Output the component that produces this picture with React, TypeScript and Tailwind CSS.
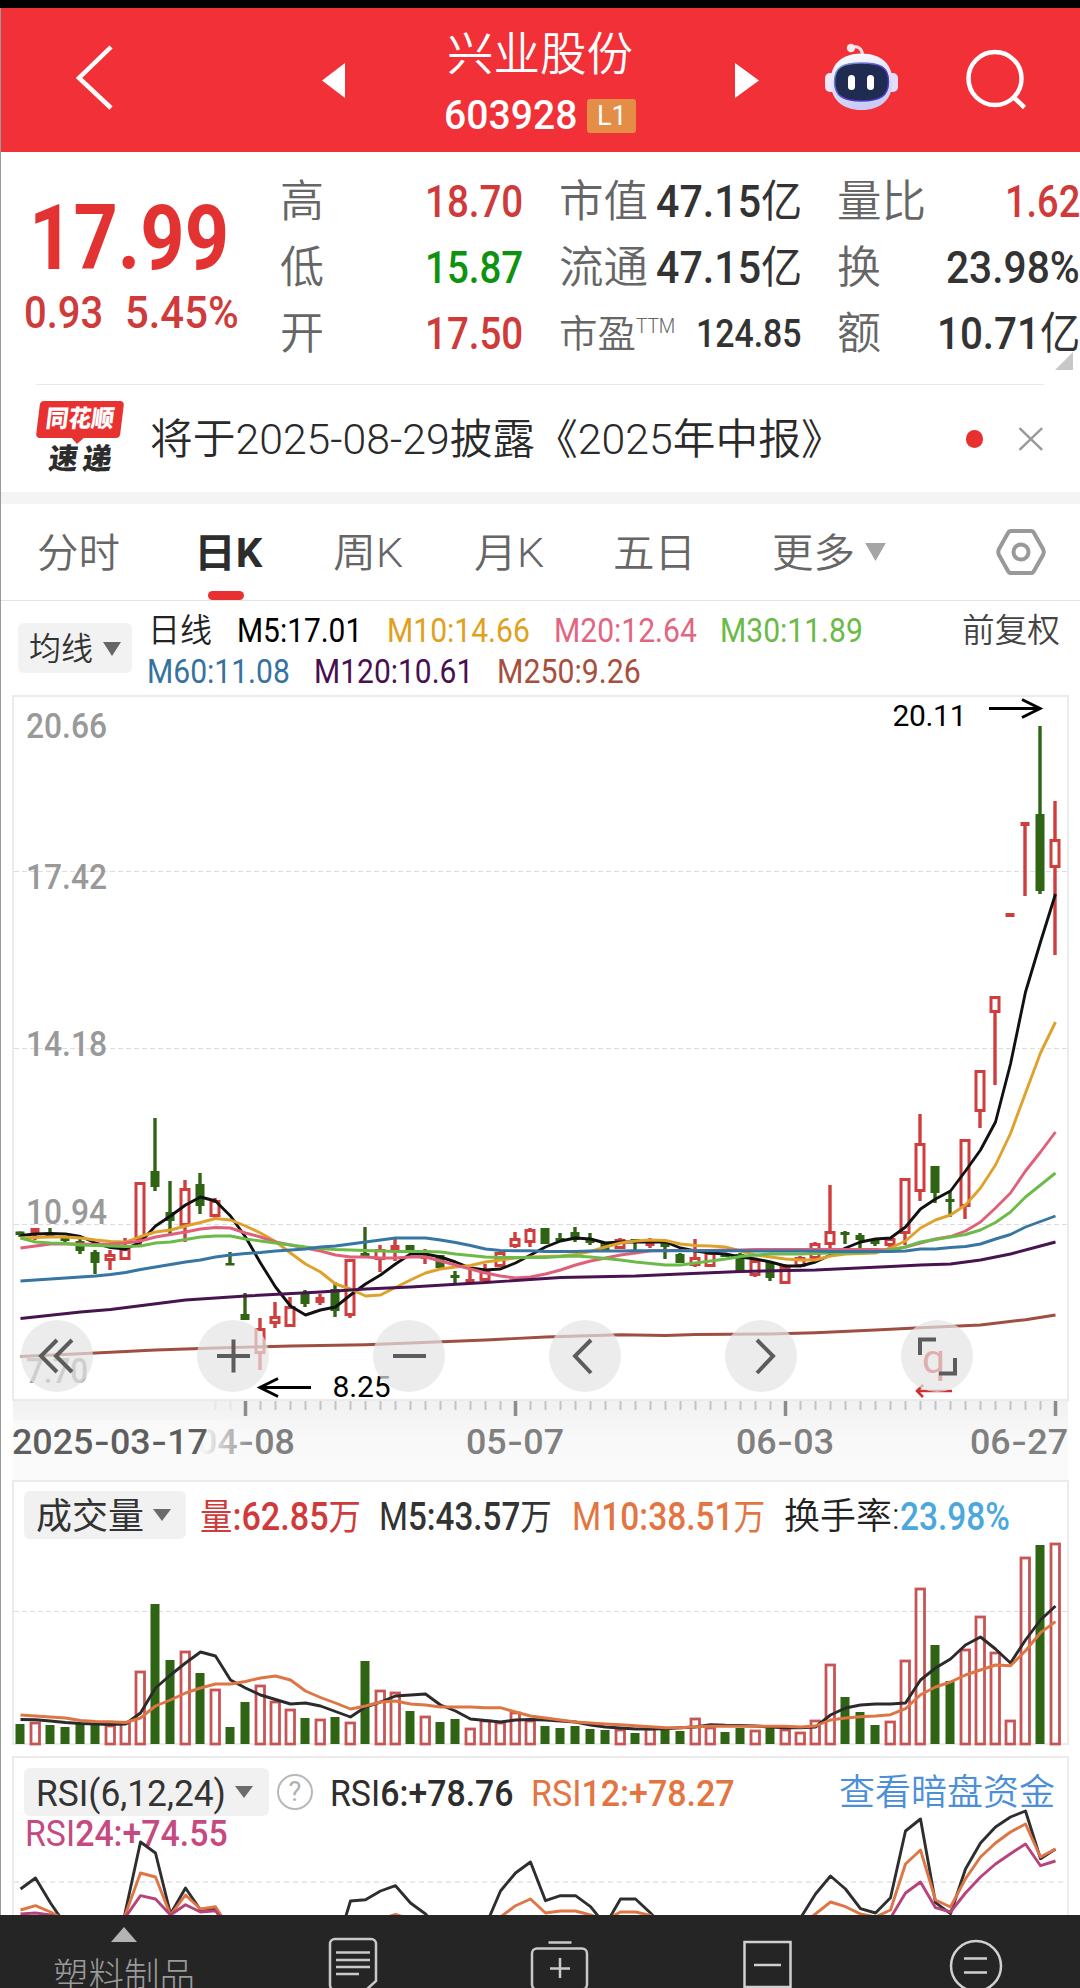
import { useLayoutEffect, useRef, useState, type ReactNode } from 'react';

// [up, high, bodyTop, bodyBottom, low, volumeTop]
type Candle = [number, number, number, number, number, number];
type Point = [number, number];

const RED = '#cf3d3d';
const GREEN = '#2f6414';

const candles: Candle[] = [
  [0, 1231, 1231.5, 1235, 1237, 1724], [1, 1228, 1228, 1234, 1240, 1722], [0, 1228, 1234, 1236, 1238, 1725],
  [0, 1238, 1238, 1241, 1242, 1727], [0, 1239, 1241, 1251, 1254, 1724], [0, 1250, 1252, 1263, 1274, 1724],
  [1, 1250, 1254, 1261, 1270, 1725], [1, 1238, 1248, 1260, 1260, 1722], [1, 1182, 1182, 1240, 1246, 1671],
  [0, 1118, 1171, 1187, 1191, 1604], [0, 1181, 1212, 1221, 1234, 1660], [1, 1180, 1188, 1226, 1242, 1651],
  [0, 1173, 1184, 1206, 1214, 1673], [1, 1198, 1200, 1217, 1218, 1689], [0, 1252, 1263, 1265.5, 1265, 1727],
  [0, 1293, 1314, 1320, 1320, 1702], [1, 1318, 1328, 1354, 1370, 1685], [1, 1302, 1316, 1324, 1328, 1701],
  [1, 1297, 1306, 1327, 1327, 1709], [0, 1290, 1292, 1304, 1307, 1718], [1, 1294, 1297, 1303, 1305, 1719],
  [0, 1282, 1289, 1311, 1317, 1717], [1, 1259, 1259, 1316, 1318, 1722], [0, 1227, 1253, 1257, 1257, 1661],
  [1, 1245, 1249, 1260, 1272, 1690], [1, 1239, 1245, 1250, 1261, 1692], [0, 1245, 1245, 1251, 1251, 1711],
  [1, 1249, 1256, 1259, 1264, 1716], [0, 1255, 1255, 1268, 1268, 1722], [0, 1271, 1275, 1278, 1283, 1719],
  [1, 1270, 1279, 1283, 1283, 1728], [1, 1264, 1271, 1281, 1281, 1720], [1, 1252, 1252, 1267, 1267, 1722],
  [1, 1232, 1238, 1247, 1248, 1712], [1, 1228, 1229, 1243, 1247, 1720], [0, 1228, 1228, 1244, 1244, 1726],
  [0, 1233, 1238, 1241, 1241, 1728], [0, 1227, 1232, 1240, 1242, 1726], [0, 1233, 1239, 1243, 1245, 1729],
  [0, 1242, 1242, 1250, 1250, 1730], [1, 1238, 1239, 1249, 1249, 1729], [0, 1239, 1239, 1242, 1250, 1733],
  [1, 1238, 1240, 1246, 1248, 1728], [0, 1242, 1243, 1247, 1259, 1729], [0, 1253, 1254, 1263, 1263, 1731],
  [1, 1239, 1257, 1266, 1267, 1718], [1, 1252, 1252, 1267, 1267, 1727], [0, 1254, 1254, 1257, 1257, 1732],
  [0, 1253, 1254, 1271, 1273, 1728], [1, 1260, 1260, 1276, 1277, 1730], [0, 1262, 1262, 1278, 1281, 1728],
  [1, 1264, 1266, 1284, 1284, 1729], [1, 1256, 1257, 1267, 1267, 1732], [1, 1242, 1243, 1259, 1259, 1720],
  [1, 1185, 1231, 1245, 1249, 1664], [0, 1231, 1232, 1235, 1244, 1697], [0, 1233, 1235, 1240, 1248, 1712],
  [0, 1238, 1240, 1244, 1246, 1725], [1, 1237, 1238, 1246, 1247, 1721], [1, 1178, 1178, 1234, 1245, 1660],
  [1, 1114, 1143, 1192, 1201, 1588], [0, 1166, 1166, 1193, 1203, 1645], [0, 1192, 1199, 1202, 1217, 1681],
  [1, 1139, 1139, 1207, 1219, 1649], [1, 1070, 1070, 1112, 1128, 1616], [1, 996, 996, 1013, 1085, 1652],
  [1, 913, 913, 917, 917, 1720], [1, 822, 822, 826, 896, 1557], [0, 726, 814, 891, 894, 1545],
  [1, 801, 839, 868, 955, 1543],
];

const ma5 = [
  1235.5, 1234, 1233.5, 1234, 1236.5, 1243, 1247.5, 1249, 1242, 1226, 1216, 1205, 1197, 1201, 1216, 1237, 1263, 1287,
  1306, 1315, 1310, 1307, 1295, 1284, 1275, 1264, 1254, 1254, 1257, 1262, 1268, 1270, 1269, 1263, 1255, 1247, 1241, 1238,
  1239, 1243, 1242, 1242, 1242, 1242, 1248, 1251, 1253, 1254, 1257, 1259, 1262, 1266, 1266, 1262, 1255, 1248, 1242, 1239,
  1238, 1227, 1209, 1199, 1191, 1171, 1150, 1122, 1064, 992, 942, 894,
];
const ma10 = [
  1238, 1237.5, 1237, 1237, 1238, 1240, 1241.5, 1242, 1236.5, 1232, 1230, 1226, 1222.5, 1218.5, 1220, 1226, 1233, 1241.5,
  1253, 1264, 1272, 1284, 1289, 1296, 1295, 1287.5, 1280, 1273, 1269, 1267, 1265.5, 1262, 1260, 1258, 1257, 1256.5, 1256,
  1254.5, 1251.5, 1247, 1243, 1241, 1240, 1240.5, 1244, 1245.5, 1246, 1247, 1251, 1255, 1257, 1259, 1260, 1260, 1256,
  1254, 1253.5, 1253, 1248, 1241, 1228, 1220, 1215, 1205, 1188, 1165, 1133.5, 1093, 1053, 1022,
];
const ma20 = [
  1248, 1246, 1244, 1244, 1244, 1244.5, 1244, 1243, 1241, 1237, 1234.5, 1232, 1229, 1227.5, 1228, 1233, 1237, 1242, 1245,
  1248, 1251, 1255, 1257, 1257, 1258, 1258, 1257, 1257, 1261, 1265, 1269, 1273, 1276, 1278, 1277, 1274, 1270, 1265, 1261,
  1258, 1255, 1253, 1250.7, 1250.5, 1250.5, 1250.5, 1250.5, 1250, 1250, 1249.5, 1249.5, 1249.5, 1249.5, 1249.5, 1249.5,
  1249.5, 1249.5, 1249.5, 1250, 1247, 1243, 1239, 1236.5, 1231, 1222, 1208, 1193, 1171, 1152, 1132,
];
const ma30 = [
  1238, 1242, 1243, 1243.5, 1245, 1245.5, 1246, 1246.5, 1246, 1243, 1242, 1239.5, 1237, 1236, 1236, 1239, 1241, 1243, 1245,
  1247, 1248.5, 1249.5, 1250, 1250.5, 1251, 1251.5, 1251.5, 1251.5, 1252, 1254, 1255.5, 1257, 1257.5, 1257.5, 1257.5,
  1257.5, 1256.5, 1256, 1257, 1258.5, 1260, 1262, 1263.5, 1265, 1265, 1263, 1261, 1259, 1256.5, 1255, 1254, 1254, 1254,
  1253.5, 1253, 1253, 1252.5, 1252, 1250, 1247, 1242, 1239.5, 1237, 1234.5, 1230, 1222.5, 1212, 1197, 1185, 1173,
];
const ma60 = [
  1281, 1280, 1279, 1278, 1277, 1276, 1274.5, 1272.5, 1269.5, 1267, 1264.5, 1262, 1260, 1257, 1255, 1253.5, 1252.5, 1251,
  1250, 1249, 1247, 1246, 1244, 1242, 1240, 1238, 1238, 1238, 1240, 1242.5, 1245.5, 1249, 1250.5, 1250.7, 1250.7, 1251.5,
  1251.5, 1251.5, 1251, 1251, 1251, 1250.7, 1250.7, 1250.7, 1250.7, 1250.7, 1250.7, 1250.7, 1250.7, 1251, 1251, 1251, 1251,
  1251, 1251.5, 1251.5, 1251.5, 1251.5, 1251.5, 1251, 1249, 1249, 1247.5, 1246.5, 1244, 1239, 1234.5, 1227, 1221.5, 1216,
];
const ma120: Point[] = [
  [0, 1318.5], [4, 1312], [6, 1309.5], [11, 1300], [15, 1296], [20, 1292], [23, 1289], [26, 1287], [31, 1282.5],
  [36, 1277.5], [41, 1276], [44, 1274], [48, 1271.5], [53, 1270], [58, 1266.5], [60, 1265], [62, 1264], [64, 1260],
  [66, 1254], [68, 1246], [69, 1242],
];
const ma250: Point[] = [
  [0, 1356.5], [5, 1353], [9, 1350], [13, 1348], [18, 1346], [23, 1344.7], [26, 1343], [31, 1340], [35, 1337],
  [40, 1334.7], [43, 1335.5], [45, 1334.5], [50, 1334], [53, 1332.7], [57, 1330], [60, 1327.7], [64, 1325], [67, 1319.7],
  [69, 1315],
];

const volMa5 = [
  1719.5, 1719.7, 1721, 1722.5, 1723.5, 1724, 1724.5, 1724, 1713, 1688, 1675, 1663, 1652, 1656, 1680, 1688, 1695, 1699.5,
  1704, 1703, 1706, 1711.5, 1717, 1707, 1702, 1696, 1695, 1694, 1705, 1711, 1719, 1720.5, 1722, 1720, 1719.5, 1720, 1721,
  1722, 1725, 1727, 1728, 1729, 1729, 1728.7, 1727.7, 1727, 1724.7, 1725.3, 1725.5, 1726, 1727, 1727.7, 1727.7, 1727, 1715,
  1708, 1705, 1704, 1704, 1703, 1680, 1668, 1659, 1645, 1637, 1649, 1663, 1640, 1620, 1606,
];
const volMa10 = [
  1715, 1716, 1717, 1718, 1720.5, 1721.5, 1721.7, 1722.5, 1718, 1706, 1700, 1693, 1688, 1684, 1684, 1681.5, 1678, 1676,
  1680, 1691, 1697.5, 1703, 1709, 1706, 1702, 1701, 1704, 1705, 1707, 1707, 1707, 1707.7, 1707.7, 1712, 1716, 1718, 1720,
  1722, 1723, 1724, 1724.7, 1725.7, 1726.7, 1727.7, 1727.7, 1726.7, 1726.3, 1726.3, 1726.3, 1726.3, 1726.3, 1726.3, 1727,
  1726, 1720, 1718, 1716.7, 1716, 1714.7, 1708.7, 1694.7, 1687, 1682, 1675, 1670, 1665, 1665.7, 1650.7, 1632.7, 1621.7,
];

const rsi6: Point[] = [
  [0, 1889], [1, 1878], [2, 1903], [3, 1925], [6, 1990], [7, 1911], [8, 1842], [9, 1853], [10, 1914], [11, 1888],
  [12, 1910], [13, 1909], [14, 1930], [21, 1950], [22, 1901], [23, 1899.7], [24, 1891], [25, 1885.7], [26, 1903],
  [27, 1914], [28, 1930], [31, 1926], [32, 1891], [33, 1873], [34, 1862], [35, 1900.7], [36, 1895.7], [37, 1895.7],
  [38, 1906.7], [39, 1925], [40, 1899], [41, 1899], [42, 1913], [43, 1930], [51, 1935], [52, 1918], [53, 1894],
  [54, 1876], [55, 1889], [56, 1908.7], [57, 1913], [58, 1897.7], [59, 1831], [60, 1819], [61, 1902.7], [62, 1913.7],
  [63, 1869], [64, 1843], [65, 1827], [66, 1817], [67, 1811], [68, 1858.7], [69, 1849],
];
const rsi12: Point[] = [
  [0, 1910], [1, 1905.7], [2, 1912], [3, 1920], [6, 1960], [7, 1914], [8, 1873], [9, 1877], [10, 1915], [11, 1895],
  [12, 1909], [13, 1906.7], [14, 1930], [24, 1919], [25, 1914.5], [26, 1919], [31, 1930], [32, 1917], [33, 1905.7],
  [34, 1899], [35, 1913], [36, 1911], [37, 1911], [38, 1915], [39, 1920], [40, 1912], [41, 1912], [42, 1915.5],
  [43, 1925], [52, 1925], [53, 1914], [54, 1902], [55, 1906.7], [56, 1914], [57, 1917], [58, 1910], [59, 1864],
  [60, 1850], [61, 1900], [62, 1907], [63, 1878.7], [64, 1857], [65, 1843], [66, 1832], [67, 1824], [68, 1857], [69, 1849],
];
const rsi24: Point[] = [
  [0, 1914], [1, 1913], [2, 1915], [3, 1920], [6, 1940], [7, 1917], [8, 1895.7], [9, 1899], [10, 1915], [11, 1904.7],
  [12, 1912], [13, 1910.7], [14, 1932], [57, 1935], [58, 1918], [59, 1893], [60, 1882], [61, 1907.7], [62, 1912],
  [63, 1893], [64, 1877], [65, 1864], [66, 1853.7], [67, 1844], [68, 1865.7], [69, 1861],
];

const xAt = (i: number) => 20 + i * 15;
const toPoints = (ys: number[]): Point[] => ys.map((y, i) => [i, y]);

function Line({ data, color, width = 2.9 }: { data: Point[]; color: string; width?: number }) {
  return (
    <polyline
      points={data.map(([i, y]) => `${xAt(i) + 0.5},${y}`).join(' ')}
      fill="none"
      stroke={color}
      strokeWidth={width}
      strokeLinejoin="round"
    />
  );
}

// Squeezes a single line of text so that it fills the width of its box
function Fit({ className = '', children }: { className?: string; children: ReactNode }) {
  const box = useRef<HTMLSpanElement>(null);
  const text = useRef<HTMLSpanElement>(null);
  const [scale, setScale] = useState(1);

  useLayoutEffect(() => {
    if (box.current && text.current) {
      setScale(box.current.offsetWidth / text.current.offsetWidth);
    }
  }, []);

  return (
    <span ref={box} className={`block shrink-0 whitespace-nowrap leading-none ${className}`}>
      <span ref={text} className="inline-block origin-left" style={{ transform: `scaleX(${scale})` }}>
        {children}
      </span>
    </span>
  );
}

function Caret({ className = '' }: { className?: string }) {
  return (
    <svg viewBox="0 0 20 13" className={`shrink-0 ${className}`} preserveAspectRatio="none">
      <path d="M1 0h18l-9 13z" fill="currentColor" />
    </svg>
  );
}

function Header() {
  return (
    <header className="flex h-36 items-center bg-[#f13037] text-white">
      <svg viewBox="70 8 46 144" className="ml-[70px] h-36 w-[46px]" fill="none" stroke="#fff" strokeWidth="4.5">
        <path d="M111 47 79 78l32 30" />
      </svg>
      <svg viewBox="0 0 23 35" className="ml-[206px] h-[35px] w-[23px]">
        <path d="M23 0v35L0 17.500z" fill="#fff" />
      </svg>
      <div className="ml-[90px] flex w-[210px] flex-col items-center pt-[7px]">
        <Fit className="w-[186px] text-[46px] font-[350]">兴业股份</Fit>
        <div className="mt-[19px] flex items-center gap-[10px]">
          <Fit className="w-[133px] text-[40px] font-medium">603928</Fit>
          <span className="flex h-[34px] w-[49px] items-center justify-center rounded-[3px] bg-[#e38d47]">
            <Fit className="w-[30px] text-[28px]">L1</Fit>
          </span>
        </div>
      </div>
      <svg viewBox="0 0 24 35" className="ml-[90px] h-[35px] w-6">
        <path d="M0 0v35l24-17.500z" fill="#fff" />
      </svg>
      <svg viewBox="820 8 80 144" className="ml-[61px] h-36 w-20">
        <defs>
          <linearGradient id="shell" x1="0" y1="0" x2="0.3" y2="1">
            <stop offset="0" stopColor="#fff" />
            <stop offset="1" stopColor="#c9cdf5" />
          </linearGradient>
          <linearGradient id="rim" x1="0" y1="0" x2="1" y2="1">
            <stop offset="0" stopColor="#7fa8d8" />
            <stop offset="0.6" stopColor="#5b35d0" />
            <stop offset="1" stopColor="#3b3cc0" />
          </linearGradient>
        </defs>
        <path d="M851 47.500c7-2 11 1 11.500 7" fill="none" stroke="#fbdfe6" strokeWidth="3" />
        <circle cx="851" cy="48" r="4.200" fill="#fbe9f0" />
        <rect x="825" y="73" width="12" height="19" rx="5" fill="#f3e6f5" />
        <rect x="886" y="73" width="12" height="19" rx="5" fill="#e7dcf7" />
        <path d="M861.500 53.500c21 0 31 12 31 28 0 18-12 28.500-31 28.500s-31-10.500-31-28.500c0-16 10-28 31-28z" fill="url(#shell)" />
        <path
          d="M861.500 63c19 0 27 4 27 18.500S880 101 861.500 101s-27-5-27-19.500 8-18.500 27-18.500z"
          fill="#1f2b50"
          stroke="url(#rim)"
          strokeWidth="1.500"
        />
        <rect x="848" y="75" width="7" height="15" rx="3.500" fill="#fff" />
        <rect x="867" y="75" width="7" height="15" rx="3.500" fill="#fff" />
      </svg>
      <svg viewBox="960 8 70 144" className="ml-[60px] h-36 w-[70px]" fill="none" stroke="#fff" strokeWidth="4.500">
        <circle cx="995" cy="78.500" r="26.500" />
        <path d="m1013.500 97 11 10.500" />
      </svg>
    </header>
  );
}

function Quote() {
  return (
    <section className="relative flex h-[232px]">
      <div className="w-[280px] pt-[41px] text-[#e33232]">
        <Fit className="ml-[29px] w-[200px] text-[91px] font-bold">17.99</Fit>
        <div className="mt-[7px] flex pl-6 text-[#cf3a3a]">
          <Fit className="w-[79px] text-[44px] font-medium">0.93</Fit>
          <Fit className="ml-[22px] w-[114px] text-[44px] font-medium">5.45%</Fit>
        </div>
      </div>
      <div className="flex w-[243px] flex-col pt-[17px] text-[#cf3a3a]">
        <div className="flex h-[66px] items-center justify-between">
          <Fit className="w-[44px] text-[44px] font-[350] text-[#666]">高</Fit>
          <Fit className="w-[98px] text-[44px] font-medium">18.70</Fit>
        </div>
        <div className="flex h-[66px] items-center justify-between">
          <Fit className="w-[44px] text-[44px] font-[350] text-[#666]">低</Fit>
          <Fit className="w-[98px] text-[44px] font-medium text-[#0f920f]">15.87</Fit>
        </div>
        <div className="flex h-[66px] items-center justify-between">
          <Fit className="w-[44px] text-[44px] font-[350] text-[#666]">开</Fit>
          <Fit className="w-[98px] text-[44px] font-medium">17.50</Fit>
        </div>
      </div>
      <div className="ml-[36px] flex w-[243px] flex-col pt-[17px] text-[#333]">
        <div className="flex h-[66px] items-center justify-between">
          <Fit className="w-[89px] text-[44px] font-[350] text-[#666]">市值</Fit>
          <Fit className="w-[146px] text-[44px] font-medium">
            47.15<span className="font-normal">亿</span>
          </Fit>
        </div>
        <div className="flex h-[66px] items-center justify-between">
          <Fit className="w-[89px] text-[44px] font-[350] text-[#666]">流通</Fit>
          <Fit className="w-[146px] text-[44px] font-medium">
            47.15<span className="font-normal">亿</span>
          </Fit>
        </div>
        <div className="flex h-[66px] items-center">
          <Fit className="w-[77px] text-[38px] font-[350] text-[#666]">市盈</Fit>
          <Fit className="mb-4 w-[39px] text-[20px] font-light text-[#666]">TTM</Fit>
          <Fit className="ml-[21px] w-[106px] text-[38px] font-medium">124.85</Fit>
        </div>
      </div>
      <div className="ml-[35px] flex w-[243px] flex-col pt-[17px] text-[#333]">
        <div className="flex h-[66px] items-center justify-between">
          <Fit className="w-[89px] text-[44px] font-[350] text-[#666]">量比</Fit>
          <Fit className="w-[75px] text-[44px] font-medium text-[#cf3a3a]">1.62</Fit>
        </div>
        <div className="flex h-[66px] items-center justify-between">
          <Fit className="w-[44px] text-[44px] font-[350] text-[#666]">换</Fit>
          <Fit className="w-[134px] text-[44px] font-medium">23.98%</Fit>
        </div>
        <div className="flex h-[66px] items-center justify-between">
          <Fit className="w-[44px] text-[44px] font-[350] text-[#666]">额</Fit>
          <Fit className="w-[143px] text-[44px] font-medium">
            10.71<span className="font-normal">亿</span>
          </Fit>
        </div>
      </div>
      <svg viewBox="0 0 18 18" className="absolute right-[7px] bottom-[14px] size-[18px]">
        <path d="M18 0v18H0z" fill="#c8c8c8" />
      </svg>
    </section>
  );
}

function News() {
  return (
    <section className="mx-9 flex h-[108px] items-center border-t border-[#e8e8e8]">
      <div className="flex w-[90px] flex-col items-center">
        <div className="relative mt-[-3px] h-[37px] w-[84px] -skew-x-[7deg] rounded-[4px] bg-[#e83232] pt-[6px] pl-[8px]">
          <Fit className="w-[68px] text-[24px] font-black text-white">同花顺</Fit>
          <svg viewBox="0 0 12 6" className="absolute top-[37px] left-9 h-[6px] w-3">
            <path d="M0 0h12L6 6z" fill="#e83232" />
          </svg>
        </div>
        <div className="mt-[7px] flex -skew-x-[7deg] gap-[5px] font-black text-[#2c2c2c]">
          <Fit className="w-[29px] text-[29px]">速</Fit>
          <Fit className="w-[29px] text-[29px]">递</Fit>
        </div>
      </div>
      <Fit className="mt-[2px] ml-[25px] w-[694px] text-[42px] font-[350] text-[#2a2a2a]">
        将于2025-08-29披露《2025年中报》
      </Fit>
      <span className="ml-[122px] size-[18px] rounded-full bg-[#e93030]" />
      <svg viewBox="0 0 26 24" className="ml-[35px] h-6 w-[26px]" fill="none" stroke="#999" strokeWidth="2.500">
        <path d="m1.500 1 23 22m0-22-23 22" />
      </svg>
    </section>
  );
}

function Tabs() {
  return (
    <nav className="flex h-[97px] items-center border-b border-[#e3e3e3] text-[40px] font-[350] text-[#666]">
      <Fit className="mt-1 ml-[37px] w-[83px]">分时</Fit>
      <div className="relative ml-[74px] flex h-full items-center">
        <Fit className="mt-1 w-[68px] font-bold text-[#2d2d2d]">日K</Fit>
        <span className="absolute bottom-0 left-[14px] h-[9px] w-[36px] rounded-full bg-[#e93030]" />
      </div>
      <Fit className="mt-1 ml-[71px] w-[70px]">周K</Fit>
      <Fit className="mt-1 ml-[71px] w-[70px]">月K</Fit>
      <Fit className="mt-1 ml-[69px] w-[83px]">五日</Fit>
      <Fit className="mt-1 ml-[76px] w-[83px]">更多</Fit>
      <Caret className="ml-[9px] h-[18px] w-[23px] text-[#a5a5a5]" />
      <svg viewBox="0 0 50 50" className="ml-[109px] size-[50px]" fill="none" stroke="#999" strokeWidth="4">
        <path d="M15 4h20q2 0 3 2l9 16q1.500 3 0 6l-9 16q-1 2-3 2H15q-2 0-3-2L3 28q-1.500-3 0-6l9-16q1-2 3-2z" />
        <circle cx="25" cy="25" r="7.500" />
      </svg>
    </nav>
  );
}

function MovingAverages() {
  return (
    <section className="flex h-[94px] pl-[18px] text-[33px]">
      <button className="mt-[22px] flex h-[50px] w-[114px] items-center rounded-md bg-[#f2f2f2] pt-[2px] pl-[11px] text-[#333]">
        <Fit className="w-[64px] text-[32px] font-[350]">均线</Fit>
        <Caret className="ml-[9px] h-[14px] w-5 text-[#666]" />
      </button>
      <div className="ml-4 flex flex-1 flex-col pt-[9px] font-[450]">
        <div className="flex h-[41px] items-center">
          <Fit className="w-[64px] font-[350] text-[#222]">日线</Fit>
          <Fit className="ml-[25px] w-[125px] text-black">M5:17.01</Fit>
          <Fit className="ml-[25px] w-[143px] text-[#e0a020]">M10:14.66</Fit>
          <Fit className="ml-[24px] w-[143px] text-[#e4657f]">M20:12.64</Fit>
          <Fit className="ml-[23px] w-[143px] text-[#68bb46]">M30:11.89</Fit>
          <Fit className="ml-[99px] w-[98px] font-[350] text-[#444]">前复权</Fit>
        </div>
        <div className="flex h-[41px] items-center">
          <Fit className="ml-[-1px] w-[143px] text-[#36729f]">M60:11.08</Fit>
          <Fit className="ml-[24px] w-[159px] text-[#48104f]">M120:10.61</Fit>
          <Fit className="ml-[24px] w-[144px] text-[#a74f3e]">M250:9.26</Fit>
        </div>
      </div>
    </section>
  );
}

function ChartButton({ children }: { children: ReactNode }) {
  return (
    <button className="flex size-[72px] items-center justify-center rounded-full bg-[#e4e4e4b3]">
      <svg viewBox="-36 -36 72 72" className="size-[72px]" fill="none" stroke="#5c5c5c" strokeWidth="4">
        {children}
      </svg>
    </button>
  );
}

function CandleChart() {
  const prices: [string, number][] = [['20.66', 738], ['17.42', 889], ['14.18', 1056], ['10.94', 1224], ['7.70', 1383]];

  return (
    <section className="relative mr-[11px] ml-3 h-[706px] border-2 border-[#ebebeb] bg-white">
      <svg viewBox="14 697 1053 702" className="block h-[702px] w-[1053px]">
        {[871.5, 1048.5, 1224.5].map(y => (
          <line key={y} x1="14" x2="1067" y1={y} y2={y} stroke="#ddd" strokeDasharray="5 3" />
        ))}
        {prices.map(([label, y]) => (
          <text
            key={label}
            x="26"
            y={y}
            fontSize="35"
            fontWeight="500"
            fill="#999"
            textLength={label.length === 5 ? 81 : 62}
            lengthAdjust="spacingAndGlyphs"
          >
            {label}
          </text>
        ))}
        {candles.map(([up, high, top, bottom, low], i) => {
          const x = xAt(i);
          const color = up ? RED : GREEN;
          const h = bottom - top;
          return (
            <g key={i}>
              {high < top && <line x1={x} x2={x} y1={high} y2={top} stroke={color} strokeWidth="3.4" />}
              {low > bottom && <line x1={x} x2={x} y1={bottom} y2={low} stroke={color} strokeWidth="3.4" />}
              {up && h > 6 ? (
                <rect x={x - 4} y={top + 1.5} width="8" height={h - 3} fill="none" stroke={color} strokeWidth="3" />
              ) : (
                <rect x={x - 4.5} y={top} width="9" height={h} fill={color} />
              )}
            </g>
          );
        })}
        <Line data={toPoints(ma5)} color="#111" />
        <Line data={toPoints(ma10)} color="#dfa12c" />
        <Line data={toPoints(ma20)} color="#e0607a" />
        <Line data={toPoints(ma30)} color="#6cbb48" />
        <Line data={toPoints(ma60)} color="#3776a2" />
        <Line data={ma120} color="#481450" />
        <Line data={ma250} color="#9f4f42" />
        <g fill="none" stroke="#000" strokeWidth="3">
          <path d="M989 708.500h50M1022 699.500l18 9-18 9" />
          <path d="M311 1387.500h-50M278 1378.500l-18 9 18 9" />
        </g>
        <text x="892.500" y="726" fontSize="30" textLength="74">20.11</text>
        <text x="332.500" y="1397" fontSize="30" textLength="58">8.25</text>
        <text x="922" y="1373" fontSize="41" fill="#d83030">q</text>
        <path d="M952 1391h-34M923 1385l-6 6 6 6" fill="none" stroke="#cf3030" strokeWidth="2.500" />
      </svg>
      <div className="absolute top-[623px] left-[7px] flex gap-[104px]">
        <ChartButton>
          <path d="M0-16-16 0 0 16M15-16-1 0l16 16" />
        </ChartButton>
        <ChartButton>
          <path d="M-16 0h33M.5-16.500v33" />
        </ChartButton>
        <ChartButton>
          <path d="M-16 0h33" />
        </ChartButton>
        <ChartButton>
          <path d="M6-16-10 0 6 17" />
        </ChartButton>
        <ChartButton>
          <path d="M-4-16 12 0-4 17" />
        </ChartButton>
        <ChartButton>
          <path d="M-17-1v-15.500h16M18 2v15.500H2" />
        </ChartButton>
      </div>
    </section>
  );
}

// Digits in the page font, separators from Inter because its hyphen is wider
function DateLabel({ date, x, width, color }: { date: string; x: number; width: number; color: string }) {
  return (
    <text x={x} y="1454" fill={color} textLength={width} lengthAdjust="spacingAndGlyphs">
      {date.split('-').map((part, i) => (
        <tspan key={i}>
          {i > 0 && <tspan fontFamily="Inter">-</tspan>}
          {part}
        </tspan>
      ))}
    </text>
  );
}

function DateAxis() {
  const dates: [string, number][] = [['04-08', 197], ['05-07', 466], ['06-03', 736], ['06-27', 970]];

  return (
    <section className="mr-3 ml-[13px] h-[79px]">
      <svg viewBox="13 1401 1055 79" className="block h-[79px] w-[1055px]">
        <defs>
          <linearGradient id="axis" x1="0" y1="0" x2="0" y2="1">
            <stop offset="0" stopColor="#f1f1f1" />
            <stop offset="0.5" stopColor="#f9f9f9" />
            <stop offset="1" stopColor="#fafafa" />
          </linearGradient>
          <linearGradient id="fade">
            <stop offset="0" stopColor="#fafafa" />
            <stop offset="0.78" stopColor="#fafafa" stopOpacity="0.95" />
            <stop offset="1" stopColor="#fafafa" stopOpacity="0" />
          </linearGradient>
        </defs>
        <rect x="13" y="1401" width="1055" height="79" fill="url(#axis)" />
        {candles.map((_, i) => {
          const major = i % 18 === 15;
          return (
            i > 12 && (
              <line
                key={i}
                x1={xAt(i) + 0.5}
                x2={xAt(i) + 0.5}
                y1="1401"
                y2={major ? 1416 : 1410}
                stroke={major ? '#8c8c8c' : i < 15 ? '#e6e6e6' : '#c4c4c4'}
                strokeWidth={major ? 3.5 : 2}
              />
            )
          );
        })}
        <g fontSize="35" fontWeight="500">
          {dates.map(([date, x]) => (
            <DateLabel key={date} date={date} x={x} width={98} color="#808080" />
          ))}
          <rect x="13" y="1420" width="244" height="50" fill="url(#fade)" />
          <DateLabel date="2025-03-17" x={12} width={196} color="#5e5e5e" />
        </g>
      </svg>
    </section>
  );
}

function VolumePanel() {
  return (
    <section className="relative mr-[11px] ml-3 h-[265px] border-2 border-[#ebebeb] bg-white">
      <div className="flex items-center pt-[9px] pl-[10px] text-[38px]">
        <button className="flex h-12 w-[162px] items-center rounded-md bg-[#f1f1f1] pt-[3px] pl-3 text-[#333]">
          <Fit className="w-[108px] text-[36px]">成交量</Fit>
          <Caret className="ml-[8px] mb-[3px] h-3 w-5 text-[#6b6b6b]" />
        </button>
        <Fit className="mt-[3px] ml-[14px] w-[161px] font-medium text-[#cf3a3a]">
          <span className="text-[36px] font-normal">量</span>:62.85<span className="text-[36px] font-normal">万</span>
        </Fit>
        <Fit className="mt-[3px] ml-[18px] w-[173px] font-medium text-[#333]">
          <span className="font-normal">M</span>5:43.57<span className="text-[36px] font-normal">万</span>
        </Fit>
        <Fit className="mt-[3px] ml-[20px] w-[193px] font-medium text-[#e37542]">
          <span className="font-normal">M</span>10:38.51<span className="text-[36px] font-normal">万</span>
        </Fit>
        <Fit className="mt-[3px] ml-[19px] w-[116px] text-[36px] font-[350] text-[#222]">换手率:</Fit>
        <Fit className="mt-[3px] w-[110px] font-medium text-[#4ba8dc]">23.98%</Fit>
      </div>
      <svg viewBox="14 1482 1053 264" className="absolute top-0 left-0 h-[264px] w-[1053px]">
        <line x1="14" x2="1067" y1="1611.500" y2="1611.500" stroke="#ddd" strokeDasharray="5 3" />
        {candles.map(([up, , , , , top], i) =>
          up ? (
            <rect
              key={i}
              x={xAt(i) - 4}
              y={top + 1}
              width="8.5"
              height={1743 - top}
              fill="none"
              stroke="#c85555"
              strokeWidth="2.8"
            />
          ) : (
            <rect key={i} x={xAt(i) - 4.5} y={top} width="9" height={1744 - top} fill={GREEN} />
          )
        )}
        <Line data={toPoints(volMa5)} color="#2b2b2b" />
        <Line data={toPoints(volMa10)} color="#dd7545" />
      </svg>
    </section>
  );
}

function RsiPanel() {
  return (
    <section className="relative mt-[11px] mr-[11px] ml-3 h-[159px] border-2 border-b-0 border-[#ebebeb] bg-white">
      <div className="flex items-center pt-[10px] pl-[10px] text-[37px]">
        <button className="flex h-12 w-[245px] items-center rounded-md bg-[#f1f1f1] pt-[2px] pl-3 text-[#333]">
          <Fit className="w-[190px] font-[450]">RSI(6,12,24)</Fit>
          <Caret className="mb-[2px] ml-[8px] h-3 w-5 text-[#6b6b6b]" />
        </button>
        <span className="ml-2 flex size-9 items-center justify-center rounded-full border-[2.5px] border-[#b8b8b8] text-[27px] leading-none text-[#b0b0b0]">
          ?
        </span>
        <Fit className="mt-[2px] ml-[17px] w-[184px] text-[#2d2d2d]">
          RSI<span className="font-medium">6:+78.76</span>
        </Fit>
        <Fit className="mt-[2px] ml-[17px] w-[204px] text-[#e37542]">
          RSI<span className="font-medium">12:+78.27</span>
        </Fit>
        <Fit className="mt-[2px] ml-[104px] w-[216px] text-[36px] font-[350] text-[#4c8fd9]">查看暗盘资金</Fit>
      </div>
      <Fit className="ml-[11px] w-[203px] text-[36px] text-[#c44a80]">
        RSI<span className="font-medium">24:+74.55</span>
      </Fit>
      <svg viewBox="14 1758 1053 157" className="absolute top-0 left-0 h-[157px] w-[1053px] overflow-hidden">
        <line x1="14" x2="1067" y1="1882" y2="1882" stroke="#e2e2e2" strokeWidth="1.500" strokeDasharray="5 4" />
        <Line data={rsi6} color="#2e2e2e" />
        <Line data={rsi12} color="#dd7545" />
        <Line data={rsi24} color="#b8437a" />
      </svg>
    </section>
  );
}

function BottomBar() {
  return (
    <footer className="flex h-[73px] overflow-hidden bg-[#252525]">
      <div className="ml-[52px] flex w-[144px] flex-col items-center pt-3 text-[#9a9a9a]">
        <svg viewBox="0 0 26 15" className="h-[15px] w-[26px] shrink-0">
          <path d="M13 0l13 15H0z" fill="#b3b3b3" />
        </svg>
        <Fit className="mt-[17px] w-[142px] text-[36px] font-light">塑料制品</Fit>
      </div>
      <svg viewBox="325 1915 56 73" className="ml-[129px] h-[73px] w-14" fill="none" stroke="#c9c9c9" strokeWidth="2.500">
        <path d="M366 1990H335a5 5 0 0 1-5-5v-41a5 5 0 0 1 5-5h36a5 5 0 0 1 5 5v37z" />
        <path d="M336 1952.500h34M336 1960h34M336 1967h34M336 1974h23" />
      </svg>
      <svg viewBox="528 1915 64 73" className="ml-[147px] h-[73px] w-16" fill="none" stroke="#c9c9c9" strokeWidth="2.500">
        <rect x="532" y="1948.500" width="55" height="41" rx="5" />
        <path d="M548.500 1942.500h23M550 1968.500h20M560 1958v20" />
      </svg>
      <svg viewBox="740 1915 56 73" className="ml-[148px] h-[73px] w-14" fill="none" stroke="#d0d0d0" strokeWidth="2.500">
        <rect x="744.500" y="1942" width="46" height="45" />
        <path d="M754 1965h27" />
      </svg>
      <svg viewBox="946 1915 60 73" className="ml-[150px] h-[73px] w-[60px]" fill="none" stroke="#d0d0d0" strokeWidth="2.500">
        <circle cx="976" cy="1966" r="25" />
        <path d="M964 1958.500h23M964 1972.500h23" />
      </svg>
    </footer>
  );
}

export default function App() {
  return (
    <div className="relative h-[1988px] w-[1080px] overflow-hidden bg-white font-['Roboto','Noto_Sans_CJK_SC',sans-serif]">
      <div className="h-2 bg-black" />
      <Header />
      <Quote />
      <News />
      <div className="h-3 bg-[#f4f4f4]" />
      <Tabs />
      <MovingAverages />
      <CandleChart />
      <DateAxis />
      <VolumePanel />
      <RsiPanel />
      <BottomBar />
      <span className="absolute top-2 left-0 h-[1907px] w-px bg-[#999]" />
    </div>
  );
}
